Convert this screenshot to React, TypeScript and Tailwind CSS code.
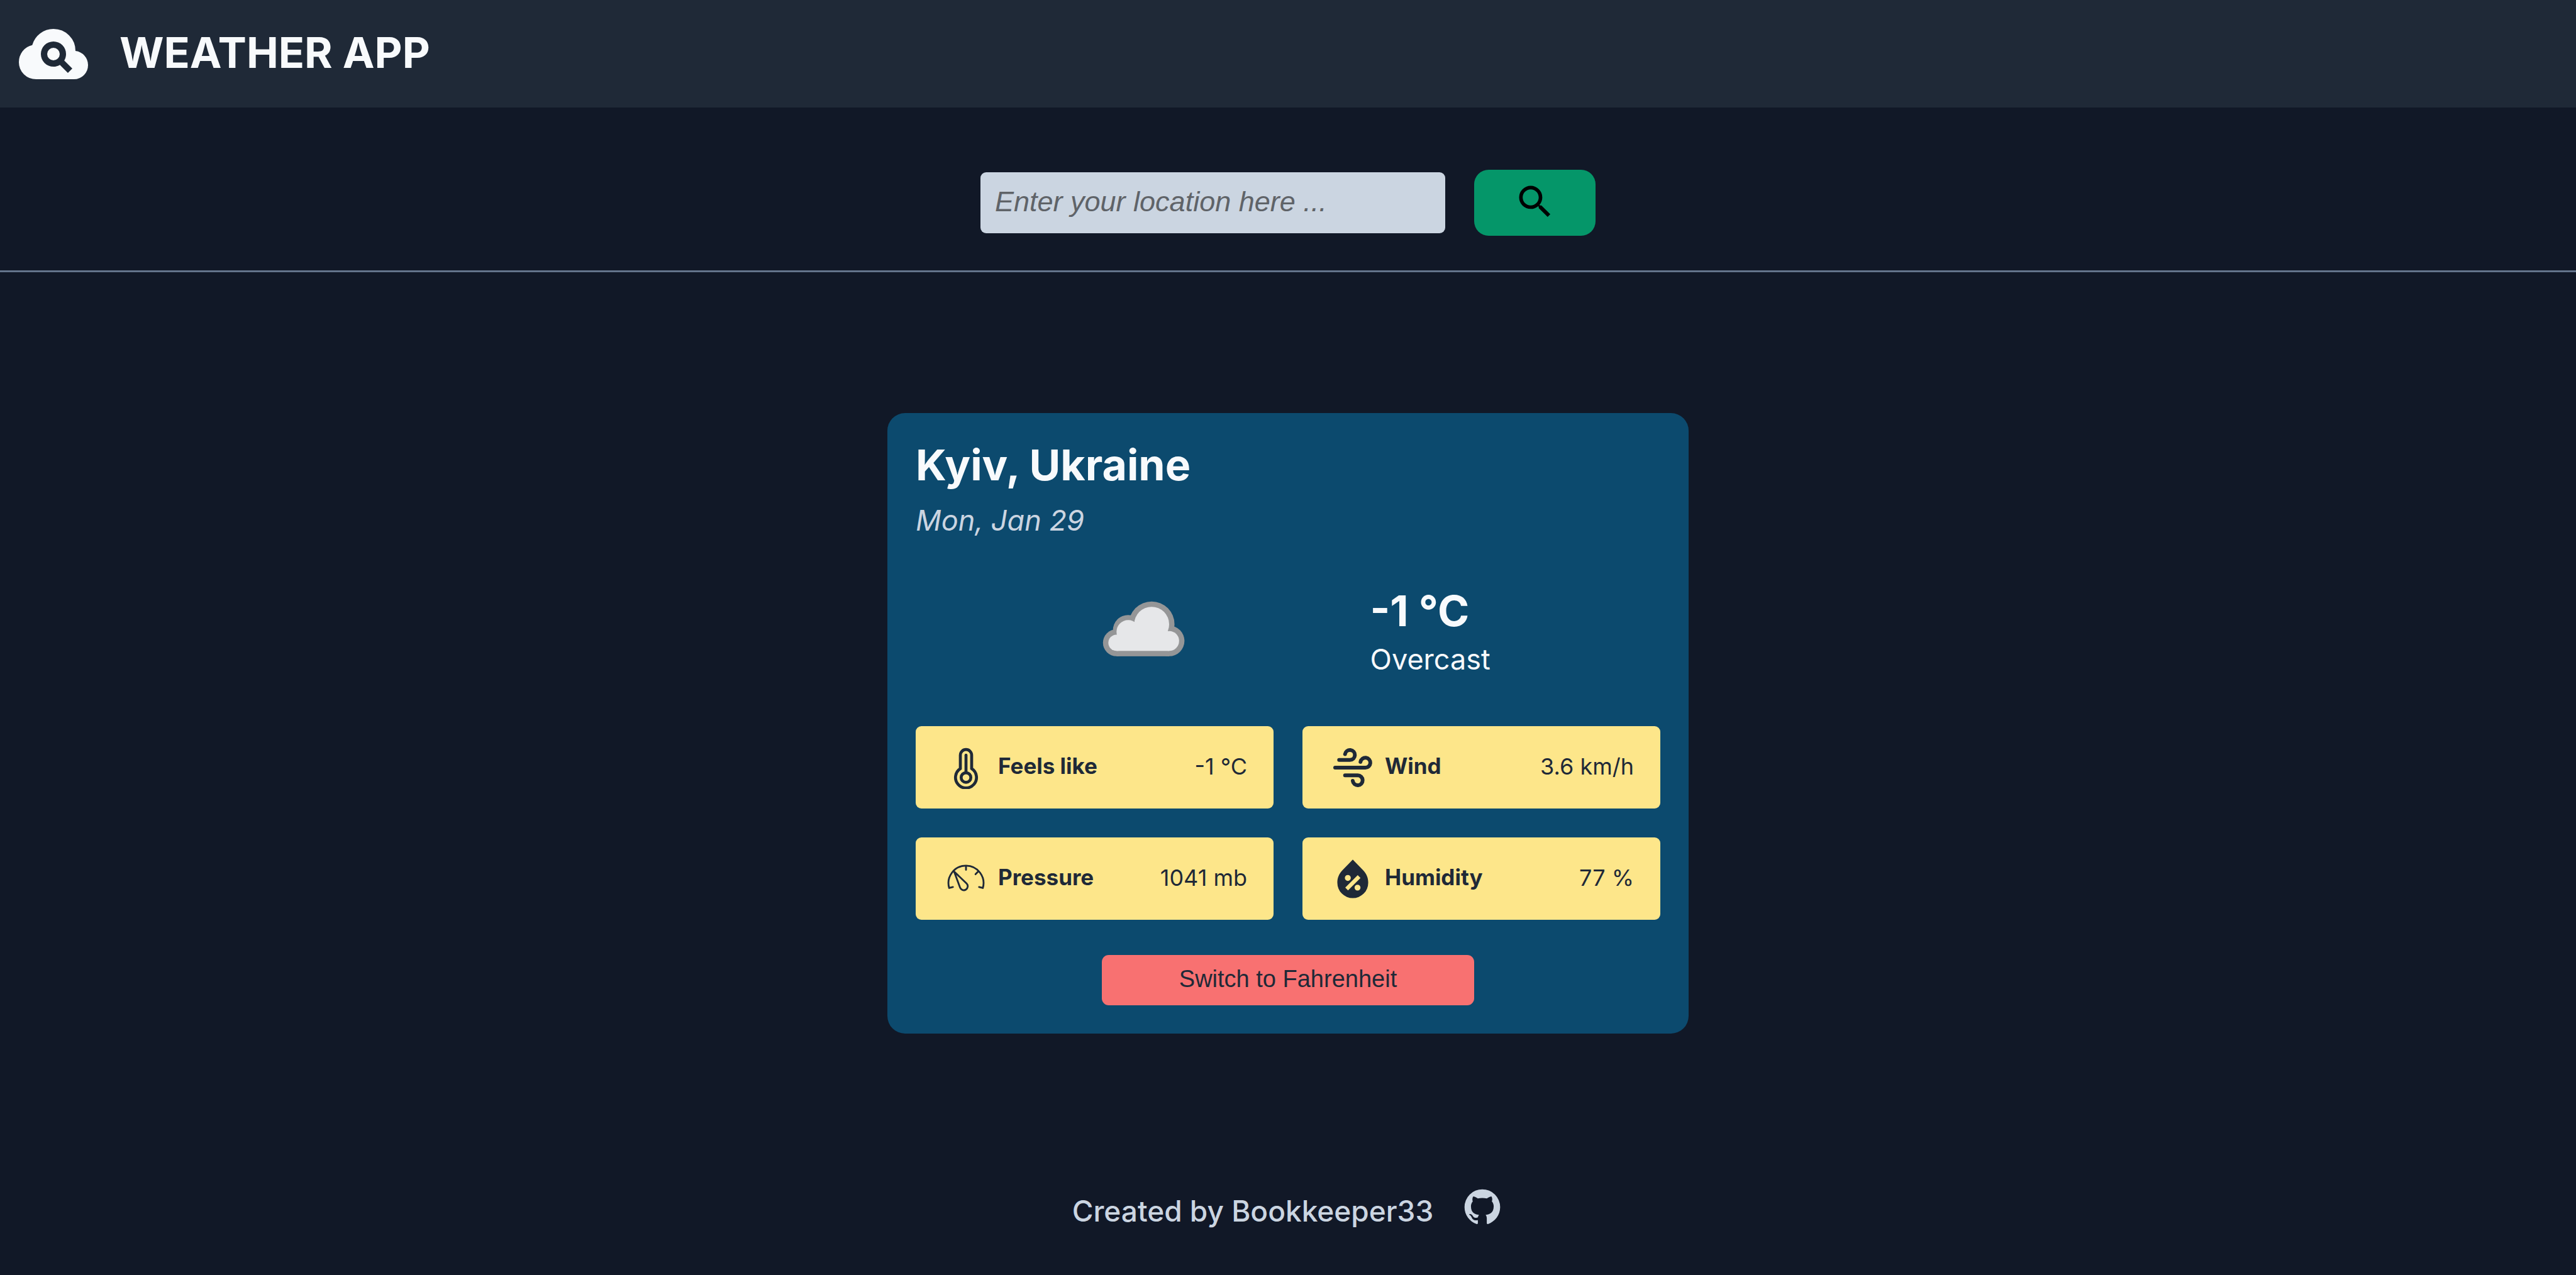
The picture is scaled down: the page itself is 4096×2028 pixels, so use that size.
import type { FormEvent, ReactNode } from "react";
import { MdSearch } from "react-icons/md";

const iconClass = "size-[68px] shrink-0";

function CloudSearchLogo() {
  return (
    <svg viewBox="0 0 24 24" fill="currentColor" className="size-[120px] shrink-0" aria-hidden="true">
      <path
        fillRule="evenodd"
        d="M6.5 20Q4.22 20 2.61 18.43 1 16.85 1 14.58 1 12.63 2.17 11.1 3.35 9.57 5.25 9.15 5.88 6.85 7.75 5.43 9.63 4 12 4 14.93 4 16.96 6.04 19 8.07 19 11 20.73 11.2 21.86 12.5 23 13.78 23 15.5 23 17.38 21.69 18.69 20.38 20 18.5 20ZM12 8A4 4 0 0 0 12 16C12.75 16 13.45 15.79 14.04 15.43L16.59 18L18 16.59L15.43 14.04C15.79 13.45 16 12.75 16 12A4 4 0 0 0 12 8ZM12 10A2 2 0 0 1 12 14A2 2 0 0 1 12 10Z"
      />
    </svg>
  );
}

function WeatherCloud() {
  return (
    <svg viewBox="-45 -33 576 576" className="size-[182px] shrink-0" role="img" aria-label="Overcast">
      <g fill="#959697">
        <circle cx="111" cy="310" r="68" />
        <circle cx="170" cy="247" r="77" />
        <circle cx="288" cy="217" r="115" />
        <circle cx="376" cy="301" r="77" />
        <rect x="111" y="250" width="265" height="128" />
      </g>
      <g fill="#e6e7e9">
        <circle cx="111" cy="310" r="41" />
        <circle cx="170" cy="255" r="59" />
        <circle cx="288" cy="217" r="88" />
        <circle cx="376" cy="301" r="50" />
        <rect x="111" y="275" width="265" height="76" />
      </g>
    </svg>
  );
}

function ThermometerIcon() {
  return (
    <svg viewBox="42 42 216 216" className={iconClass} fill="none" stroke="currentColor" strokeWidth="15" strokeLinecap="round" aria-hidden="true">
      <path d="M121.5 155V87a28.5 28.5 0 0 1 57 0V155A53 53 0 1 1 121.5 155Z" />
      <circle cx="150" cy="200" r="24.5" />
      <path d="M150 87V175" />
    </svg>
  );
}

function WindIcon() {
  return (
    <svg viewBox="42 42 216 216" className={iconClass} fill="none" stroke="currentColor" strokeWidth="19" strokeLinecap="round" aria-hidden="true">
      <path d="M81 111H136A25 25 0 1 0 111 82" />
      <path d="M61 150H213A25 25 0 1 0 189 121" />
      <path d="M111 189H175A25 25 0 1 1 150 217" />
    </svg>
  );
}

function BarometerIcon() {
  return (
    <svg viewBox="42 42 216 216" className={iconClass} fill="none" stroke="currentColor" strokeWidth="9" strokeLinecap="round" strokeLinejoin="round" aria-hidden="true">
      <path d="M84 191L65 196A88.500 88.500 0 1 1 235 196L216 191" />
      <path d="M150 86V104M213 111L198 126" />
      <path d="M90 113L153 173A20 20 0 1 1 120 194Z" />
    </svg>
  );
}

function HumidityIcon() {
  return (
    <svg viewBox="42 42 216 216" className={iconClass} fill="currentColor" aria-hidden="true">
      <path
        fillRule="evenodd"
        d="M150 52L204 108C221 126 228 147 228 169A78 78 0 0 1 72 169C72 147 79 126 96 108ZM125 130A15 15 0 0 0 125 160A15 15 0 0 0 125 130ZM174 179A15 15 0 0 0 174 209A15 15 0 0 0 174 179ZM175 131L189 145L126 208L112 194Z"
      />
    </svg>
  );
}

function GithubIcon() {
  return (
    <svg viewBox="0 0 24 24" className={iconClass} fill="currentColor" aria-hidden="true">
      <path d="M12 2A10 10 0 0 0 2 12C2 16.42 4.87 20.17 8.84 21.5C9.34 21.58 9.5 21.27 9.5 21C9.5 20.77 9.5 20.14 9.5 19.31C6.73 19.91 6.14 17.97 6.14 17.97C5.68 16.81 5.03 16.5 5.03 16.5C4.12 15.88 5.1 15.9 5.1 15.9C6.1 15.97 6.63 16.93 6.63 16.93C7.5 18.45 8.97 18 9.54 17.76C9.63 17.11 9.89 16.67 10.17 16.42C7.95 16.17 5.62 15.31 5.62 11.5C5.62 10.39 6 9.5 6.65 8.79C6.55 8.54 6.2 7.5 6.75 6.15C6.75 6.15 7.59 5.88 9.5 7.17C10.29 6.95 11.15 6.84 12 6.84C12.85 6.84 13.71 6.95 14.5 7.17C16.41 5.88 17.25 6.15 17.25 6.15C17.8 7.5 17.45 8.54 17.35 8.79C18 9.5 18.38 10.39 18.38 11.5C18.38 15.32 16.04 16.16 13.81 16.41C14.17 16.72 14.5 17.33 14.5 18.26C14.5 19.6 14.5 20.68 14.5 21C14.5 21.27 14.66 21.59 15.17 21.5C19.14 20.16 22 16.42 22 12A10 10 0 0 0 12 2Z" />
    </svg>
  );
}

function Metric({ icon, label, value }: { icon: ReactNode; label: string; value: string }) {
  return (
    <div className="flex h-[131px] items-center justify-between rounded-[9px] bg-[#fde68a] pr-[42px] pl-[46px] text-[#1f2937]">
      <dt className="flex items-center gap-[17px] text-[35px] font-bold">
        {icon}
        <span className="pb-[4px]">{label}</span>
      </dt>
      <dd className="pb-[4px] text-[36px]">{value}</dd>
    </div>
  );
}

export default function App() {
  const handleSubmit = (event: FormEvent) => event.preventDefault();

  return (
    <div className="flex min-h-screen flex-col bg-[#111827] font-['Inter',sans-serif] text-[#f8fafc]">
      <header className="flex h-[171px] items-center gap-[45px] bg-[#1f2937] px-[25px]">
        <CloudSearchLogo />
        <h1 className="pb-[4px] text-[68px] leading-[75px] font-bold">WEATHER APP</h1>
      </header>

      <form
        onSubmit={handleSubmit}
        className="flex items-center justify-center gap-[46px] border-b-3 border-[#64748b] pt-[99px] pb-[55px]"
      >
        <input
          type="text"
          aria-label="Location"
          placeholder="Enter your location here ..."
          className="h-[97px] w-[739px] rounded-[9px] bg-[#cbd5e1] px-[23px] pb-[4px] font-['Liberation_Sans',sans-serif] text-[45px] text-[#1f2937] italic placeholder:text-[#5f6368]"
        />
        <button
          type="submit"
          aria-label="Search"
          className="flex h-[105px] w-[193px] items-center justify-center rounded-[23px] bg-[#059669] pb-[3px] text-black"
        >
          <MdSearch className="size-[68px]" />
        </button>
      </form>

      <main className="flex justify-center pt-[224px]">
        <section className="w-[1274px] rounded-[28px] bg-[#0c4a6e] p-[45px]">
          <h2 className="text-[68px] leading-[75px] font-bold">Kyiv, Ukraine</h2>
          <p className="mt-[23px] text-[45px] leading-[55px] text-[#cbd5e1] italic">Mon, Jan 29</p>

          <div className="mt-[59px] flex items-center justify-evenly">
            <WeatherCloud />
            <div className="flex flex-col gap-[12px]">
              <p className="text-[68px] leading-[75px] font-bold">-1 °C</p>
              <p className="text-[45px] leading-[55px]">Overcast</p>
            </div>
          </div>

          <dl className="mt-[59px] grid grid-cols-2 gap-[46px]">
            <Metric icon={<ThermometerIcon />} label="Feels like" value="-1 °C" />
            <Metric icon={<WindIcon />} label="Wind" value="3.6 km/h" />
            <Metric icon={<BarometerIcon />} label="Pressure" value="1041 mb" />
            <Metric icon={<HumidityIcon />} label="Humidity" value="77 %" />
          </dl>

          <button
            type="button"
            className="mx-auto mt-[56px] block h-[80px] w-1/2 rounded-[11px] bg-[#f87171] pb-[4px] font-['Liberation_Sans',sans-serif] text-[38px] text-[#1f2937]"
          >
            Switch to Fahrenheit
          </button>
        </section>
      </main>

      <footer className="mt-auto flex items-center justify-center gap-[44px] pb-[62px] text-[#cbd5e1]">
        <p className="text-[46px] leading-[68px] font-medium">Created by Bookkeeper33</p>
        <a href="https://github.com/Bookkeeper33" aria-label="GitHub profile" className="pb-[12px]">
          <GithubIcon />
        </a>
      </footer>
    </div>
  );
}
